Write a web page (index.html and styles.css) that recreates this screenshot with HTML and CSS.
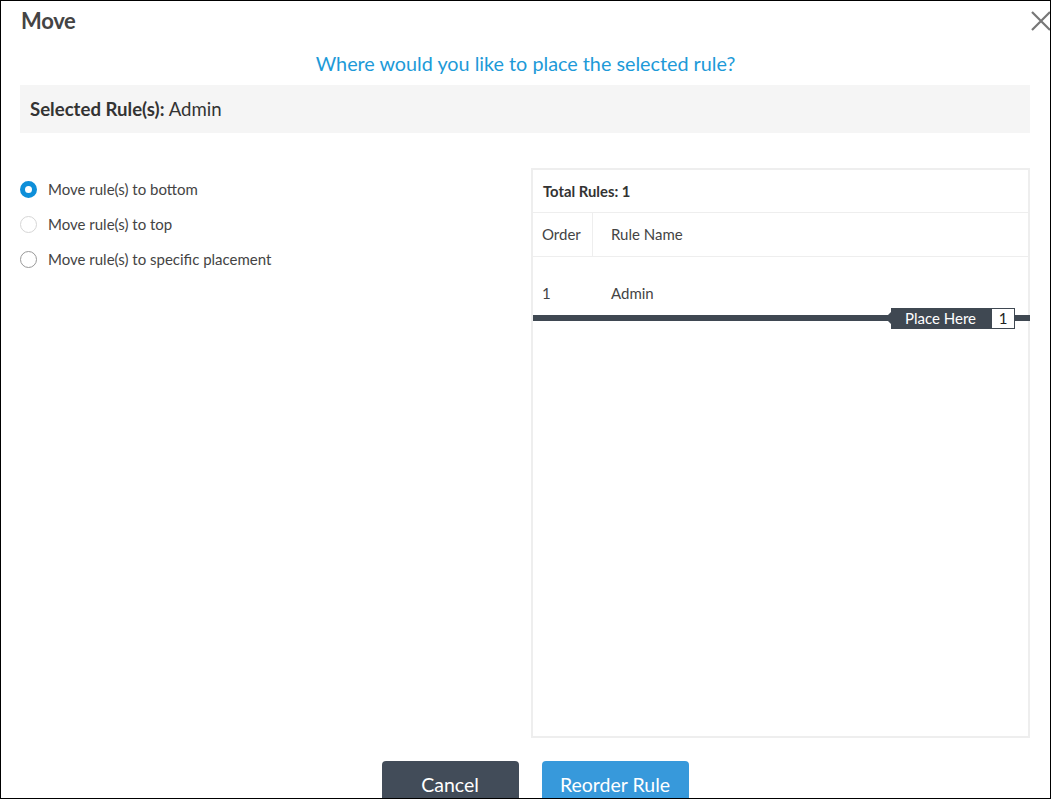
FILE: index.html
```html
<!DOCTYPE html>
<html>
<head>
<meta charset="utf-8">
<link rel="stylesheet" href="styles.css">
</head>
<body>
<div class="frame">
  <div class="header">
    <h1 class="title">Move</h1>
    <svg class="close" width="22" height="22" viewBox="0 0 22 22"><path d="M2 2L20 20M20 2L2 20" stroke="#777" stroke-width="2.2" fill="none"/></svg>
  </div>
  <p class="subtitle">Where would you like to place the selected rule?</p>
  <div class="selected"><b>Selected Rule(s):</b> Admin</div>
  <div class="content">
    <div class="options">
      <label class="opt"><span class="radio checked"></span>Move rule(s) to bottom</label>
      <label class="opt"><span class="radio light"></span>Move rule(s) to top</label>
      <label class="opt"><span class="radio"></span>Move rule(s) to specific placement</label>
    </div>
    <div class="panel">
      <div class="total">Total Rules: 1</div>
      <div class="thead">
        <div class="c-order">Order</div>
        <div class="c-name">Rule Name</div>
      </div>
      <div class="row">
        <div class="c-order">1</div>
        <div class="c-name">Admin</div>
      </div>
      <div class="placebar">
        <div class="place-tag">
          <span class="place-label">Place Here</span>
          <span class="place-num">1</span>
        </div>
      </div>
    </div>
  </div>
  <div class="actions">
    <button class="btn cancel">Cancel</button>
    <button class="btn primary">Reorder Rule</button>
  </div>
</div>
</body>
</html>
```
FILE: styles.css
```css
html, body { margin: 0; padding: 0; background: #fff; }
body { font-family: Lato, "Open Sans", sans-serif; color: #444; }
.frame {
  box-sizing: border-box;
  width: 1051px;
  height: 799px;
  border: 1px solid #000;
  overflow: hidden;
}
.header {
  display: flex;
  justify-content: space-between;
  align-items: flex-start;
  padding: 7px 0 0 20px;
  height: 38px;
  box-sizing: border-box;
}
.title {
  margin: 0;
  font-size: 22px;
  font-weight: 700;
  color: #444;
  line-height: 26px;
  letter-spacing: -0.3px;
}
.close { margin-top: 2px; margin-right: -2px; }
.subtitle {
  margin: 11px 0 0;
  text-align: center;
  color: #1d9ad8;
  font-size: 19.8px;
  line-height: 26px;
}
.selected {
  margin: 9px 20px 0 19px;
  height: 48px;
  background: #f5f5f5;
  padding-left: 10px;
  font-size: 18.6px;
  line-height: 48px;
  color: #333;
}
.selected b { font-weight: 700; }
.content {
  display: flex;
  margin-top: 35px;
  padding-left: 19px;
}
.options {
  width: 511px;
  padding-top: 11px;
  display: flex;
  flex-direction: column;
  gap: 15px;
}
.opt {
  display: flex;
  align-items: center;
  font-size: 15px;
  line-height: 20px;
  color: #444;
}
.radio {
  box-sizing: border-box;
  width: 17px;
  height: 17px;
  border-radius: 50%;
  border: 1px solid #999;
  margin-right: 11px;
  flex: none;
}
.radio.light { border-color: #d6d6d6; }
.radio.checked { border: 5px solid #0e8fd9; background: #fff; }
.panel {
  box-sizing: border-box;
  width: 499px;
  height: 570px;
  border: 2px solid #eeeeee;
}
.total {
  height: 42px;
  line-height: 42px;
  padding-left: 10px;
  font-size: 14.8px;
  font-weight: 700;
  color: #333;
  border-bottom: 1px solid #eee;
}
.thead, .row {
  display: flex;
  font-size: 15px;
  color: #444;
}
.thead { height: 43px; line-height: 43px; border-bottom: 1px solid #eee; }
.thead .c-order { border-right: 1px solid #eee; }
.c-order { width: 50px; padding-left: 9px; }
.c-name { padding-left: 18px; }
.row { height: 58px; padding-top: 16px; box-sizing: border-box; line-height: 40px; }
.row .c-name { padding-left: 19px; }
.placebar {
  position: relative;
  height: 6px;
  background: #3f4852;
  margin-right: -2px;
}
.place-tag {
  position: absolute;
  right: 15px;
  top: -7px;
  display: flex;
  height: 21px;
}
.place-label {
  position: relative;
  background: #3f4852;
  color: #fff;
  font-size: 15px;
  line-height: 21px;
  padding: 0 14px 0 14px;
  width: 72px;
}
.place-label::before {
  content: "";
  position: absolute;
  left: -6px;
  top: 4px;
  border-style: solid;
  border-width: 6px 6px 6px 0;
  border-color: transparent #3f4852 transparent transparent;
}
.place-num {
  box-sizing: border-box;
  width: 24px;
  height: 21px;
  background: #fff;
  border: 1px solid #3f4852;
  color: #222;
  font-size: 15px;
  line-height: 19px;
  text-align: center;
}
.actions {
  display: flex;
  justify-content: center;
  gap: 23px;
  margin-top: 23px;
  padding-left: 19px;
}
.btn {
  font-family: Lato, "Open Sans", sans-serif;
  font-size: 19.5px;
  color: #fff;
  border: none;
  border-radius: 4px;
  height: 48px;
  line-height: 48px;
  padding: 0;
}
.cancel { background: #424c59; width: 137px; }
.primary { background: #3799db; width: 147px; }
```
